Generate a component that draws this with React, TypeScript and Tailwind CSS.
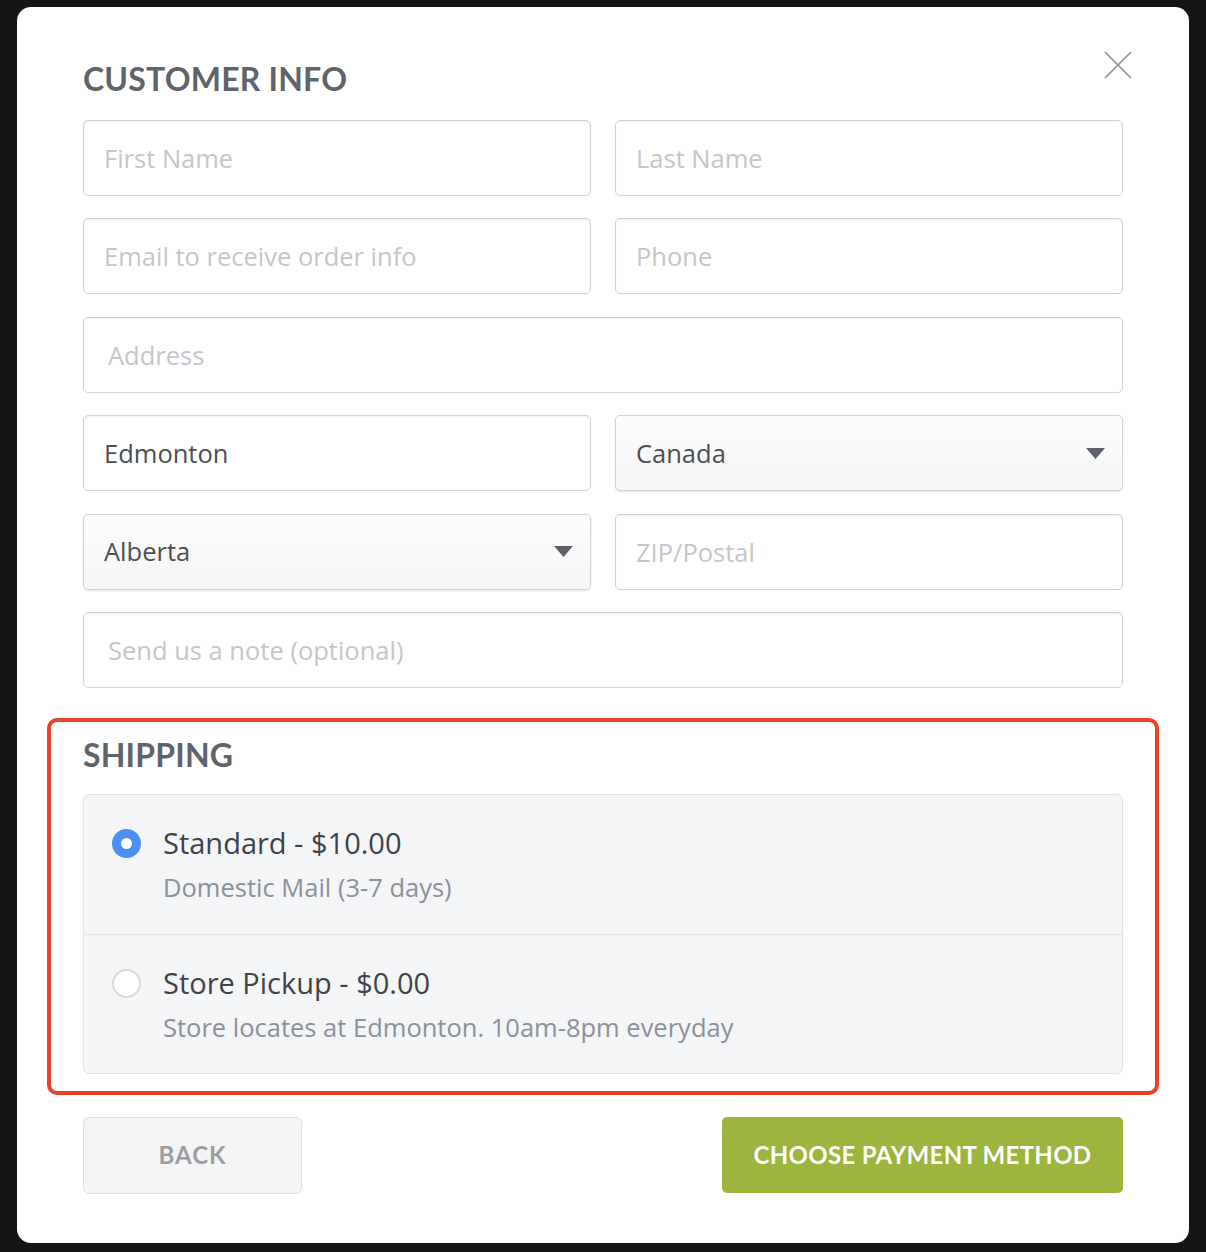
import { useState } from 'react';

const body = { fontFamily: '"Open Sans", "Liberation Sans", sans-serif' };
const head = { fontFamily: 'Lato, "Liberation Sans", sans-serif' };

const inputCls =
  'h-[76px] w-full rounded-[5px] border border-[#cfd3d8] bg-white px-[20px] text-[25.5px] text-[#4a4e55] placeholder-[#c3c7cc] shadow-[inset_0_1px_2px_rgba(0,0,0,0.06)] outline-none';

function SelectBox({ value }: { value: string }) {
  return (
    <div className="flex h-[76px] w-full items-center justify-between rounded-[5px] border border-[#cfd3d8] bg-[linear-gradient(#fdfdfd,#f6f6f6)] pl-[20px] pr-[17px] text-[25.5px] text-[#4a4e55] shadow-[0_1px_2px_rgba(0,0,0,0.12)]">
      <span>{value}</span>
      <svg width="19" height="11" viewBox="0 0 19 11">
        <path d="M0 0 H19 L9.5 11 Z" fill="#5c6067" />
      </svg>
    </div>
  );
}

function Radio({ checked }: { checked: boolean }) {
  return checked ? (
    <span className="flex h-[29px] w-[29px] shrink-0 items-center justify-center rounded-full bg-[#4a90f2]">
      <span className="block h-[11px] w-[11px] rounded-full bg-white" />
    </span>
  ) : (
    <span className="block h-[29px] w-[29px] shrink-0 rounded-full border-2 border-[#d6d9dd] bg-white" />
  );
}

const options = [
  { title: 'Standard - $10.00', note: 'Domestic Mail (3-7 days)' },
  { title: 'Store Pickup - $0.00', note: 'Store locates at Edmonton. 10am-8pm everyday' },
];

export default function App() {
  const [choice, setChoice] = useState(0);

  return (
    <div className="min-h-[1252px] bg-[#141516] pl-[17px] pr-[17px] pt-[7px]" style={body}>
      <div className="relative h-[1236px] w-[1172px] rounded-[14px] bg-white px-[66px] pt-[51px]">
        <button className="absolute right-[57px] top-[44px]" aria-label="Close">
          <svg width="28" height="28" viewBox="0 0 28 28">
            <path d="M1 1 L27 27 M27 1 L1 27" stroke="#8e8e8e" strokeWidth="1.6" />
          </svg>
        </button>

        <h1 className="text-[32px] font-bold leading-[42px] tracking-[0.2px] text-[#5f636a]" style={head}>
          CUSTOMER INFO
        </h1>

        <div className="mt-[20px] grid grid-cols-2 gap-x-[24px] gap-y-[22.4px]">
          <input className={inputCls} placeholder="First Name" style={body} />
          <input className={inputCls} placeholder="Last Name" style={body} />
          <input className={inputCls} placeholder="Email to receive order info" style={body} />
          <input className={inputCls} placeholder="Phone" style={body} />
          <input className={`${inputCls} col-span-2 pl-[24px]`} placeholder="Address" style={body} />
          <input className={inputCls} defaultValue="Edmonton" style={body} />
          <SelectBox value="Canada" />
          <SelectBox value="Alberta" />
          <input className={inputCls} placeholder="ZIP/Postal" style={body} />
          <input className={`${inputCls} col-span-2 pl-[24px]`} placeholder="Send us a note (optional)" style={body} />
        </div>

        <div className="relative mt-[46px]">
          <div className="pointer-events-none absolute -bottom-[21px] -left-[36px] -right-[36px] -top-[16px] rounded-[10px] border-4 border-[#ee4027]" />
          <h2 className="text-[32px] font-bold leading-[42px] tracking-[0.2px] text-[#5f636a]" style={head}>
            SHIPPING
          </h2>
          <div className="mt-[18px] overflow-hidden rounded-[6px] border border-[#e0e2e6] bg-[#f4f5f7]">
            {options.map((o, i) => (
              <label
                key={o.title}
                onClick={() => setChoice(i)}
                className={`flex h-[139px] cursor-pointer items-start gap-[22px] pl-[28px] pt-[31px] ${i > 0 ? 'border-t border-[#e0e2e6]' : ''}`}
              >
                <span className="block pt-[3px]">
                  <Radio checked={choice === i} />
                </span>
                <span className="flex flex-col">
                  <span className="text-[29px] leading-[34px] text-[#3f434a]">{o.title}</span>
                  <span className="mt-[12px] text-[25.5px] leading-[30px] text-[#8c9199]">{o.note}</span>
                </span>
              </label>
            ))}
          </div>
        </div>

        <div className="mt-[43px] flex items-center justify-between">
          <button
            className="h-[77px] w-[219px] rounded-[6px] border border-[#dfe0e2] bg-[#f4f4f5] text-[24px] font-bold tracking-[1px] text-[#999ea5]"
            style={head}
          >
            BACK
          </button>
          <button
            className="h-[76px] w-[401px] rounded-[5px] bg-[#9db43e] text-[24px] font-bold tracking-[0.3px] text-white"
            style={head}
          >
            CHOOSE PAYMENT METHOD
          </button>
        </div>
      </div>
    </div>
  );
}
